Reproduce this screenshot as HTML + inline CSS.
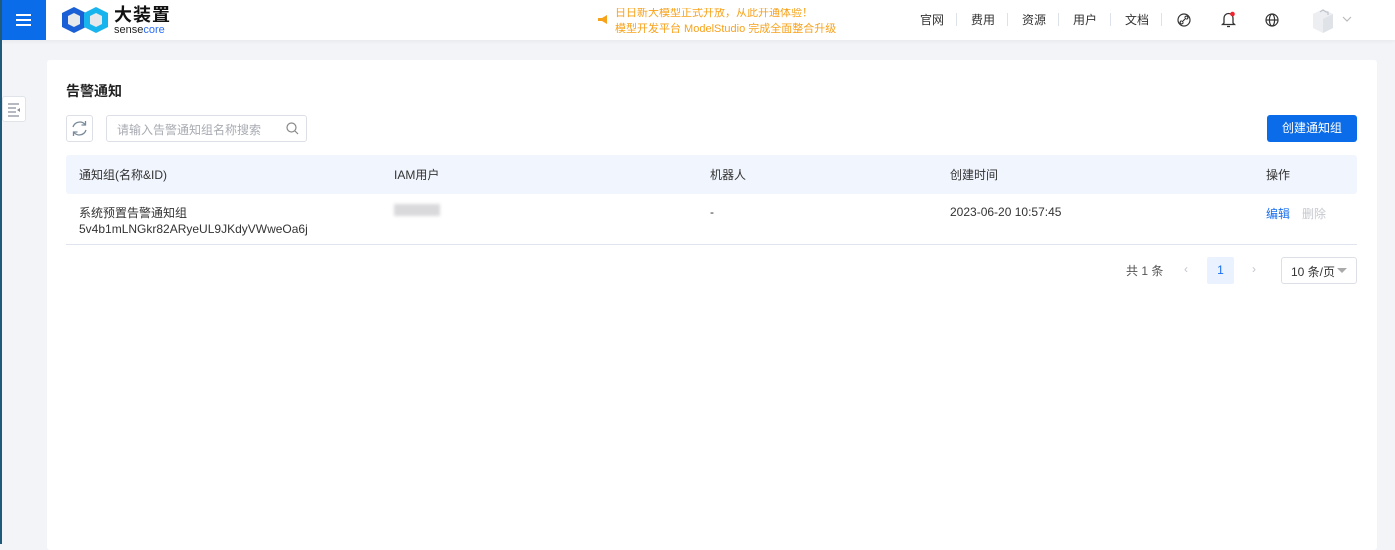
<!DOCTYPE html>
<html><head><meta charset="utf-8">
<style>
*{margin:0;padding:0;box-sizing:border-box}
body{width:1395px;height:544px;overflow:hidden;background:#f2f4f8;font-family:"Liberation Sans","Noto Sans CJK SC",sans-serif;font-size:12px;color:#333;position:relative}
.left{position:absolute;left:0;top:0;width:2px;height:544px;background:#1f5a7a}
.hdr{position:absolute;left:0;top:0;width:1395px;height:40px;background:#fff;box-shadow:0 1px 4px rgba(0,0,0,.06)}
.menu{position:absolute;left:0;top:0;width:46px;height:40px;background:#0a6ce8}
.menu i{position:absolute;left:16px;width:15px;height:2px;background:#fff}
.logo{position:absolute;left:60px;top:5px}
.brand{position:absolute;left:114px;top:3px;font-size:18px;font-weight:bold;color:#111;letter-spacing:1px;line-height:24px}
.sc{position:absolute;left:114px;top:24px;font-size:11px;color:#222;line-height:12px}
.sc b{color:#2a6cf6;font-weight:normal}
.news{position:absolute;left:615px;top:8px;color:#f7a21b;font-size:11px;line-height:16px;height:25px;overflow:hidden}
.news div{margin-top:-3px}
.nav{position:absolute;top:11px;font-size:12px;color:#333}
.sep{position:absolute;top:13px;width:1px;height:13px;background:#dde2ea}
.card{position:absolute;left:47px;top:60px;width:1330px;height:490px;background:#fff;border-radius:3px}
.tog{position:absolute;left:2px;top:96px;width:24px;height:26px;border:1px solid #dfe3ea;border-radius:3px;background:#fff}
.title{position:absolute;left:66px;top:81px;font-size:14px;font-weight:bold;color:#222}
.ref{position:absolute;left:66px;top:115px;width:27px;height:27px;border:1px solid #dcdfe6;border-radius:3px}
.search{position:absolute;left:106px;top:115px;width:201px;height:27px;border:1px solid #dcdfe6;border-radius:3px;color:#a8abb2;padding:5px 10px;font-size:12px}
.btn{position:absolute;left:1267px;top:115px;width:90px;height:27px;background:#0a6ce8;border-radius:3px;color:#fff;text-align:center;line-height:26px;font-size:12px}
.th{position:absolute;left:66px;top:155px;width:1291px;height:39px;background:#f1f5fd;border-radius:3px}
.t{position:absolute;font-size:12px;color:#333}
.line{position:absolute;left:66px;top:244px;width:1291px;height:1px;background:#dfe4ee}
</style></head><body>
<div class="hdr">
 <div class="menu"><i style="top:14px"></i><i style="top:19px"></i><i style="top:24px"></i></div>
 <svg class="logo" width="50" height="30" viewBox="0 0 50 30">
  <polygon points="2,8 14,2 26,8 26,22 14,28 2,22" fill="#1a5fd6"/>
  <polygon points="24,8 36,2 48,8 48,22 36,28 24,22" fill="#18b4ee"/>
  <polygon points="8,11 14,8 20,11 20,19 14,22 8,19" fill="#e6e8ec"/>
  <polygon points="30,11 36,8 42,11 42,19 36,22 30,19" fill="#e6e8ec"/>
 </svg>
 <div class="brand">大装置</div>
 <div class="sc">sense<b>core</b></div>
 <svg style="position:absolute;left:597px;top:14px" width="12" height="11"><polygon points="1,4 5,4 10,1 10,10 5,7 1,7" fill="#f7a21b"/></svg>
 <div class="news"><div>日日新大模型正式开放，从此开通体验！<br>模型开发平台 ModelStudio 完成全面整合升级</div></div>
 <div class="nav" style="left:920px">官网</div><div class="sep" style="left:956px"></div>
 <div class="nav" style="left:971px">费用</div><div class="sep" style="left:1007px"></div>
 <div class="nav" style="left:1022px">资源</div><div class="sep" style="left:1058px"></div>
 <div class="nav" style="left:1073px">用户</div><div class="sep" style="left:1110px"></div>
 <div class="nav" style="left:1125px">文档</div><div class="sep" style="left:1161px"></div>
 <svg style="position:absolute;left:1177px;top:13px" width="14" height="14" viewBox="0 0 14 14" fill="none" stroke="#333" stroke-width="1.2"><circle cx="7" cy="7" r="6"/><path d="M5 9l4-4M4.5 7.5l-1 1a1.4 1.4 0 002 2l1-1M9.5 6.5l1-1a1.4 1.4 0 00-2-2l-1 1"/></svg>
 <svg style="position:absolute;left:1221px;top:11px" width="15" height="17" viewBox="0 0 15 17" fill="none" stroke="#333" stroke-width="1.3"><path d="M3 12V7a4.5 4.5 0 019 0v5l1.5 1.5h-12z"/><path d="M6 15.5h3"/><circle cx="11.5" cy="3" r="2.3" fill="#f5222d" stroke="none"/></svg>
 <svg style="position:absolute;left:1265px;top:13px" width="14" height="14" viewBox="0 0 14 14" fill="none" stroke="#333" stroke-width="1.2"><circle cx="7" cy="7" r="6"/><ellipse cx="7" cy="7" rx="2.6" ry="6"/><path d="M1 7h12"/></svg>
 <svg style="position:absolute;left:1311px;top:8px" width="24" height="26" viewBox="0 0 24 26"><polygon points="2,6 12,1 22,6 22,20 12,25 2,20" fill="#eceef2"/><polygon points="12,11 22,6 22,20 12,25" fill="#dfe2e7"/><path d="M9 4l3-2 3 2 2 0 0 3" stroke="#b8bcc4" fill="none"/></svg>
 <svg style="position:absolute;left:1342px;top:16px" width="10" height="7"><path d="M1 1l4 4 4-4" stroke="#bbb" fill="none" stroke-width="1.2"/></svg>
</div>
<div class="left"></div>
<div class="tog"><svg width="22" height="24" viewBox="0 0 22 24"><path d="M5 7h11M5 11h8M5 15h8M5 19h11" stroke="#8a8f99" stroke-width="1.2"/><polygon points="17,11 14,13 17,15" fill="#8a8f99"/></svg></div>
<div class="card"></div>
<div class="title">告警通知</div>
<div class="ref"><svg width="25" height="25" viewBox="0 0 25 25" fill="none" stroke="#7a8a9a" stroke-width="1.3"><path d="M6 11a7 7 0 0112-2.5M19 14a7 7 0 01-12 2.5"/><path d="M18.5 5v4h-4M6.5 20v-4h4"/></svg></div>
<div class="search">请输入告警通知组名称搜索
 <svg style="position:absolute;right:7px;top:6px" width="13" height="13" viewBox="0 0 13 13" fill="none" stroke="#888" stroke-width="1.2"><circle cx="5.5" cy="5.5" r="4.5"/><path d="M9 9l3 3"/></svg></div>
<div class="btn">创建通知组</div>
<div class="th"></div>
<div class="t" style="left:79px;top:166px">通知组(名称&amp;ID)</div>
<div class="t" style="left:394px;top:166px">IAM用户</div>
<div class="t" style="left:710px;top:166px">机器人</div>
<div class="t" style="left:950px;top:166px">创建时间</div>
<div class="t" style="left:1266px;top:166px">操作</div>
<div class="t" style="left:79px;top:204px">系统预置告警通知组</div>
<div class="t" style="left:79px;top:222px">5v4b1mLNGkr82ARyeUL9JKdyVWweOa6j</div>
<div style="position:absolute;left:394px;top:204px;width:46px;height:12px;background:#d9d9dc;filter:blur(1.5px)"></div>
<div class="t" style="left:710px;top:205px">-</div>
<div class="t" style="left:950px;top:205px">2023-06-20 10:57:45</div>
<div class="t" style="left:1266px;top:205px;color:#1a6ff0">编辑</div>
<div class="t" style="left:1302px;top:205px;color:#c5c8ce">删除</div>
<div class="line"></div>
<div class="t" style="left:1126px;top:262px;color:#555">共 1 条</div>
<div class="t" style="left:1184px;top:262px;color:#c0c4cc">‹</div>
<div style="position:absolute;left:1207px;top:257px;width:27px;height:27px;background:#eaf2ff;color:#1a6ff0;text-align:center;line-height:26px;border-radius:2px">1</div>
<div class="t" style="left:1252px;top:262px;color:#c0c4cc">›</div>
<div style="position:absolute;left:1281px;top:257px;width:76px;height:27px;border:1px solid #dcdfe6;border-radius:3px;padding:5px 9px;color:#333">10 条/页<svg style="position:absolute;right:9px;top:10px" width="10" height="6"><polygon points="0,0 10,0 5,5" fill="#aaa"/></svg></div>
</body></html>
